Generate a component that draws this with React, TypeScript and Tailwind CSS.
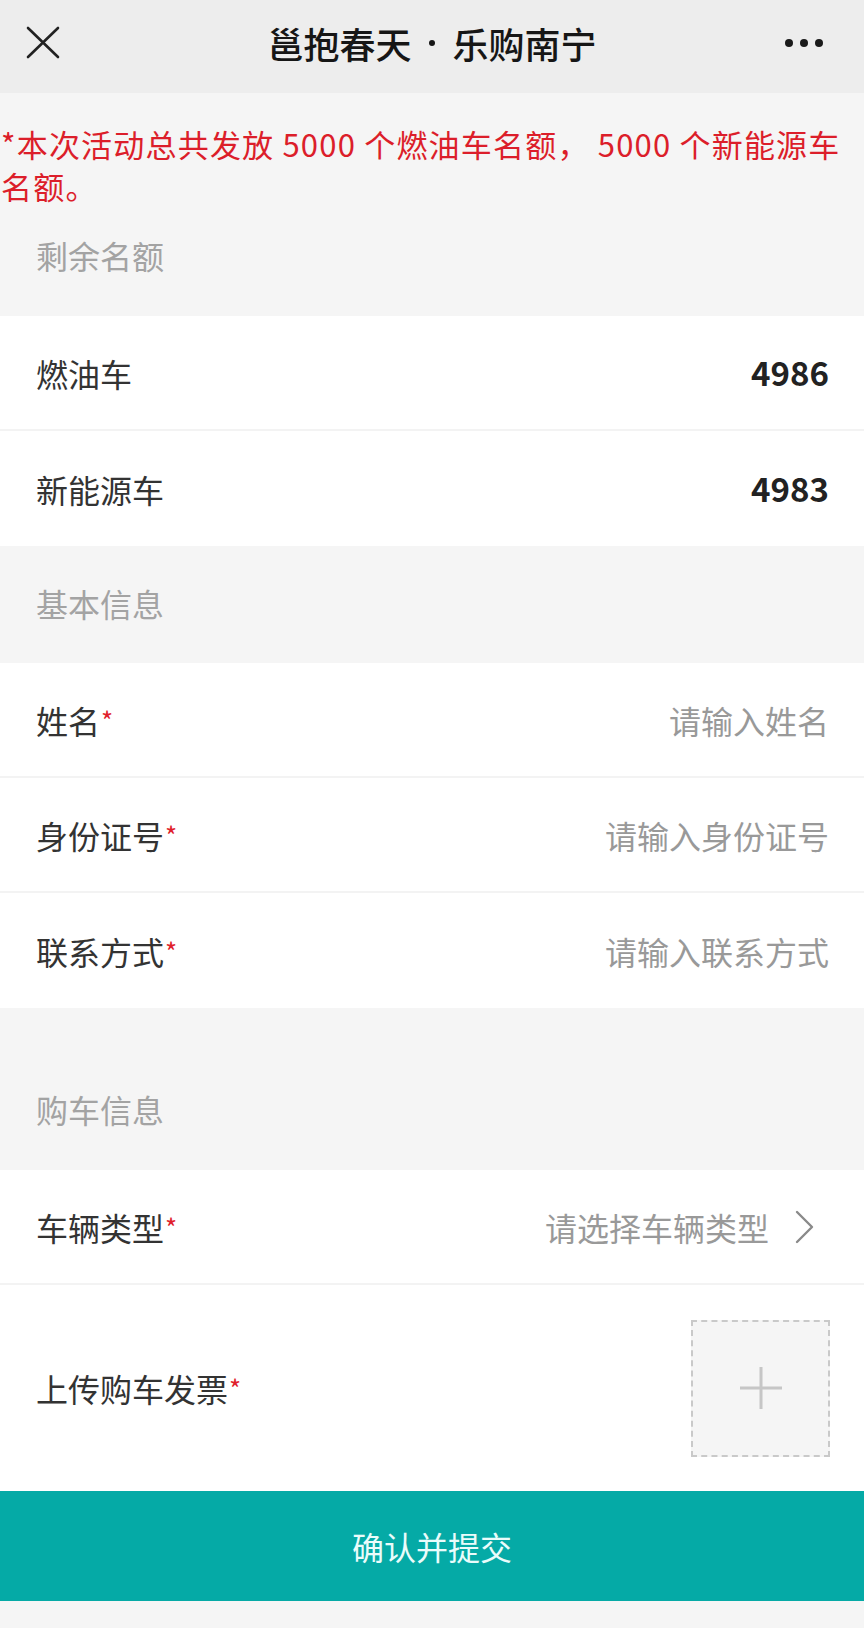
import React from "react";

const font = { fontFamily: '"Noto Sans CJK SC", "Noto Sans", sans-serif' };

function Star() {
  return <span className="text-[#e0202a] text-[26px] align-top relative top-[3px] ml-[1px]">*</span>;
}

function Row({ label, required, right, border = true }: { label: string; required?: boolean; right: React.ReactNode; border?: boolean }) {
  return (
    <div className={`h-[115px] flex items-center justify-between pl-[36px] pr-[35px] bg-white ${border ? "border-b-2 border-[#f3f3f3]" : ""}`}>
      <div className="text-[32px] leading-none text-[#333333]">
        {label}
        {required && <Star />}
      </div>
      {right}
    </div>
  );
}

function SectionHeader({ title, className = "" }: { title: string; className?: string }) {
  return (
    <div className={`flex items-center pl-[36px] text-[32px] text-[#a3a3a3] ${className}`}>{title}</div>
  );
}

function Placeholder({ text }: { text: string }) {
  return <div className="text-[32px] leading-none text-[#999999]">{text}</div>;
}

export default function App() {
  return (
    <div className="w-[864px] h-[1628px] bg-[#f5f5f5] flex flex-col overflow-hidden" style={font}>
      {/* Header */}
      <div className="h-[93px] bg-[#ededed] grid grid-cols-[1fr_auto_1fr] items-center pb-[8px] shrink-0">
        <div className="pl-[26px] flex items-center">
          <svg width="34" height="34" viewBox="0 0 34 34">
            <path d="M2 2 L32 31 M32 2 L2 31" stroke="#222" strokeWidth="2.6" strokeLinecap="round" />
          </svg>
        </div>
        <div className="text-[36px] leading-none font-medium text-[#161616] flex items-center">
          <span>邕抱春天</span>
          <span className="w-[41px] flex justify-center">
            <span className="w-[6px] h-[6px] rounded-full bg-[#161616]" />
          </span>
          <span>乐购南宁</span>
        </div>
        <div className="flex justify-end pr-[41px] gap-[7px]">
          <span className="w-[8px] h-[8px] rounded-full bg-[#1a1a1a]" />
          <span className="w-[8px] h-[8px] rounded-full bg-[#1a1a1a]" />
          <span className="w-[8px] h-[8px] rounded-full bg-[#1a1a1a]" />
        </div>
      </div>

      {/* Notice */}
      <div className="pt-[30px] pl-[1px] text-[31px] leading-[42px] tracking-[1.2px] text-[#dc1e2a] shrink-0">
        <div className="whitespace-nowrap">*本次活动总共发放 5000 个燃油车名额，&nbsp;5000 个新能源车</div>
        <div className="whitespace-nowrap">名额。</div>
      </div>

      <SectionHeader title="剩余名额" className="h-[109px] pb-[14px]" />

      <Row label="燃油车" right={<div className="text-[33px] leading-none font-semibold text-[#222]">4986</div>} />
      <Row label="新能源车" border={false} right={<div className="text-[33px] leading-none font-semibold text-[#222]">4983</div>} />

      <SectionHeader title="基本信息" className="h-[117px] pb-[4px]" />

      <Row label="姓名" required right={<Placeholder text="请输入姓名" />} />
      <Row label="身份证号" required right={<Placeholder text="请输入身份证号" />} />
      <Row label="联系方式" required border={false} right={<Placeholder text="请输入联系方式" />} />

      <SectionHeader title="购车信息" className="h-[162px] pt-[40px]" />

      <Row
        label="车辆类型"
        required
        right={
          <div className="flex items-center gap-[26px] pr-[14px]">
            <Placeholder text="请选择车辆类型" />
            <svg width="20" height="34" viewBox="0 0 20 34">
              <path d="M2 2 L17 17 L2 32" stroke="#8a8a8a" strokeWidth="2.4" fill="none" strokeLinecap="round" strokeLinejoin="round" />
            </svg>
          </div>
        }
      />

      <div className="h-[206px] flex items-center justify-between pl-[36px] pr-[34px] bg-white">
        <div className="text-[32px] leading-none text-[#333333]">
          上传购车发票
          <Star />
        </div>
        <div className="w-[139px] h-[137px] border-2 border-dashed border-[#c9c9c9] bg-[#f5f5f5] flex items-center justify-center">
          <svg width="44" height="44" viewBox="0 0 44 44">
            <path d="M22 1 V43 M1 22 H43" stroke="#c6c6c6" strokeWidth="3" />
          </svg>
        </div>
      </div>

      <div className="h-[110px] bg-[#05aaa6] flex items-center justify-center text-[32px] text-[#eafcfb] shrink-0">
        确认并提交
      </div>

      <div className="flex-1 bg-[#f5f5f5]" />
    </div>
  );
}
